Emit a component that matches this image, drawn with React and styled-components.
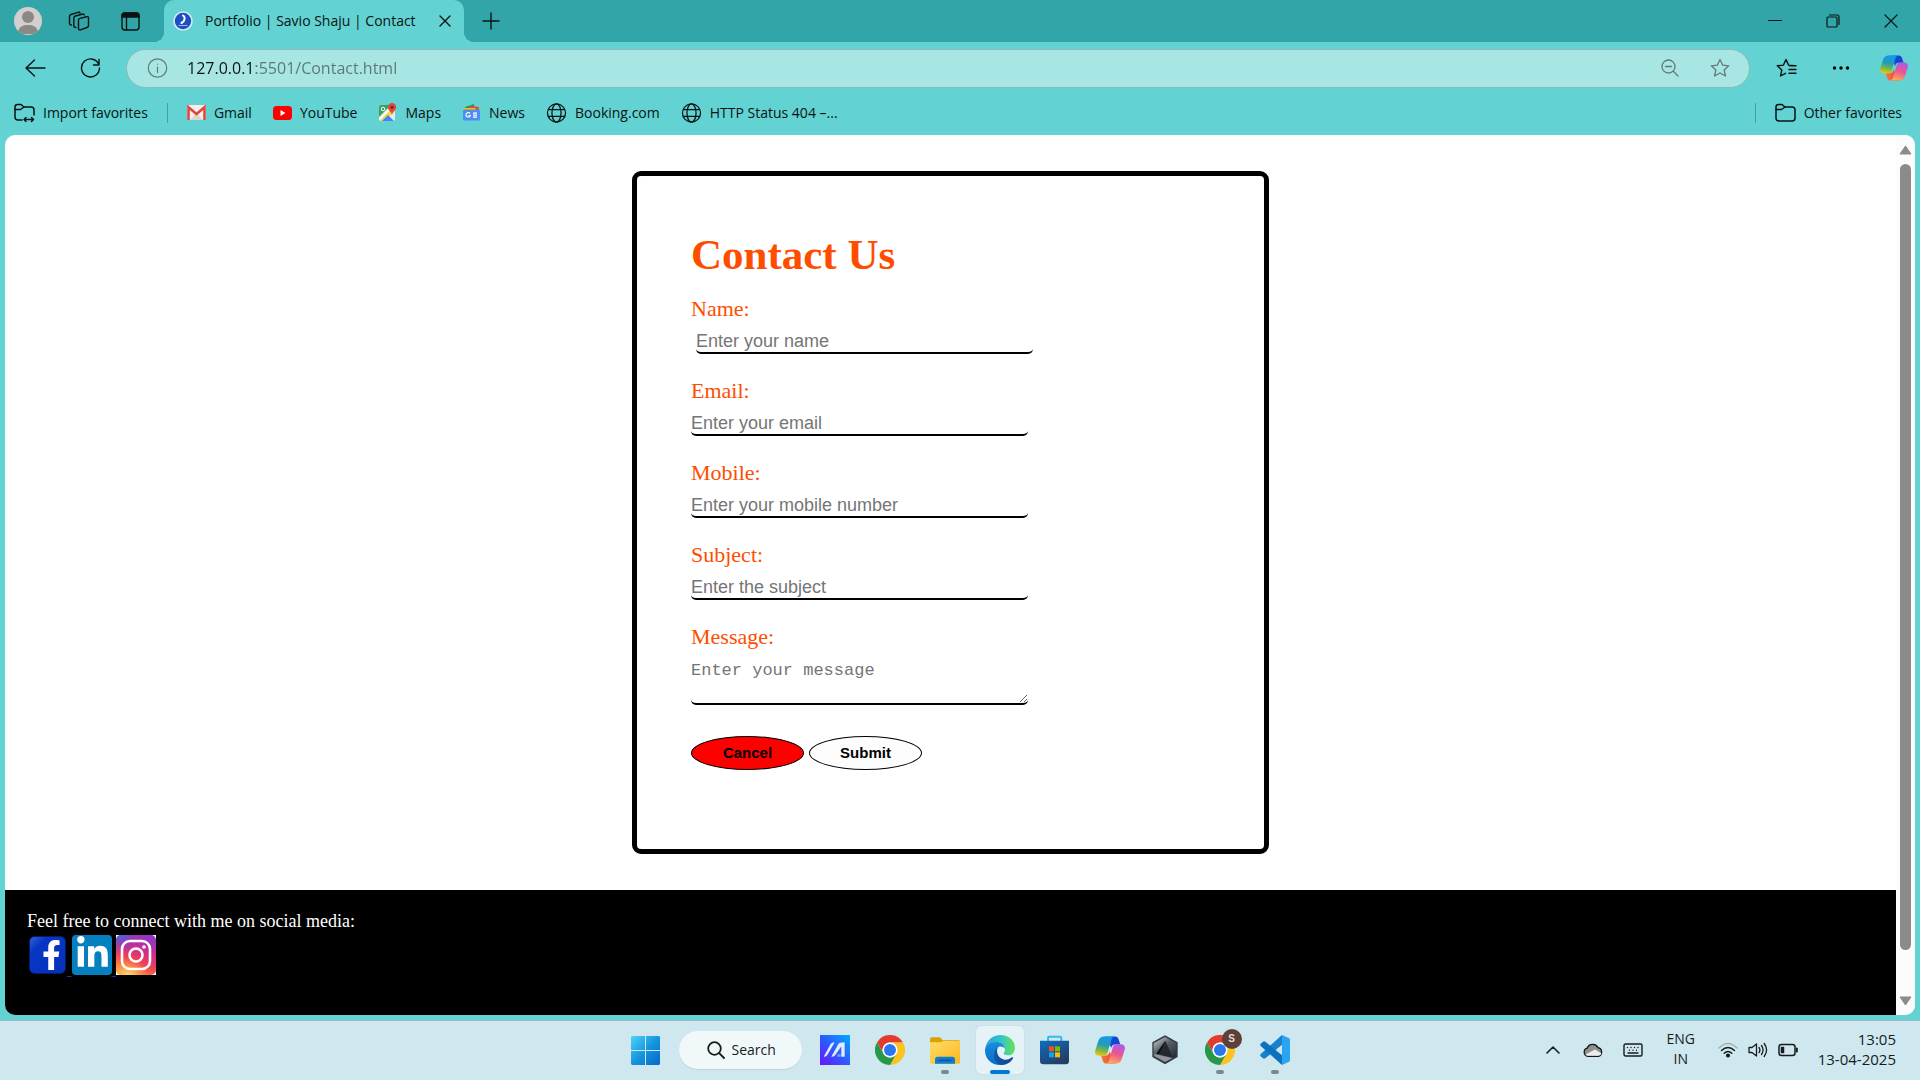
import React from "react";
import styled, { createGlobalStyle } from "styled-components";
import { FaFacebookF, FaLinkedinIn } from "react-icons/fa";

const ui = `"Open Sans", "Noto Sans", sans-serif`;
const serif = `"Liberation Serif", "Times New Roman", serif`;
const sans = `"Liberation Sans", Arial, sans-serif`;
const mono = `"Liberation Mono", "Courier New", monospace`;

const GlobalStyle = createGlobalStyle`
  *, *::before, *::after { box-sizing: border-box; }
  body { margin: 0; overflow: hidden; }
  button, input, textarea { margin: 0; font: inherit; }
  svg { flex: none; }
`;

const Screen = styled.div`
  display: flex;
  flex-direction: column;
  height: 100vh;
  background: #62d2d2;
  color: #0b1414;
  font: 14px/20px ${ui};
`;

/* ---------- browser chrome ---------- */

const TitleBar = styled.header`
  display: flex;
  height: 42px;
  background: #32a5a8;
`;

const PlainButton = styled.button`
  display: flex;
  align-items: center;
  justify-content: center;
  flex: none;
  width: ${(p) => p.$w || 20}px;
  height: 100%;
  padding: 0;
  border: 0;
  background: none;
  color: inherit;
`;

const ProfileTools = styled.div`
  display: flex;
  align-items: center;
  gap: 5px;
  padding: 0 11px 0 5px;
`;

const Tab = styled.div`
  position: relative;
  display: flex;
  align-items: center;
  width: 300px;
  padding: 0 12px 0 9px;
  border-radius: 10px 10px 0 0;
  background: #62d2d2;

  &::before,
  &::after {
    content: "";
    position: absolute;
    bottom: 0;
    width: 10px;
    height: 10px;
  }
  &::before {
    left: -10px;
    background: radial-gradient(circle at 0 0, #32a5a8 10px, #62d2d2 10px);
  }
  &::after {
    right: -10px;
    background: radial-gradient(circle at 100% 0, #32a5a8 10px, #62d2d2 10px);
  }
`;

const TabTitle = styled.span`
  flex: 1;
  margin-left: 12px;
  white-space: nowrap;
`;

const WindowControls = styled.div`
  display: flex;
  margin-left: auto;
`;

const Toolbar = styled.nav`
  display: flex;
  align-items: center;
  height: 52px;
  padding: 0 0 0 7px;
`;

const AddressBar = styled.label`
  display: flex;
  align-items: center;
  flex: 1;
  height: 39px;
  margin: 0 8px;
  padding: 0 4px 0 20px;
  border: 1px solid #8fb9ba;
  border-radius: 20px;
  background: #a8e6e4;
  color: #60797b;
`;

const AddressInput = styled.input`
  flex: 1;
  min-width: 0;
  height: 30px;
  margin-left: 19px;
  padding: 0;
  border: 0;
  outline: 0;
  font-size: 16px;
  color: transparent;
  background: linear-gradient(90deg, #0b1414 69px, #5c7577 69px);
  background-clip: text;
  -webkit-background-clip: text;
`;

const FavoritesBar = styled.nav`
  display: flex;
  align-items: center;
  height: 41px;
  padding: 0 18px 4px 14px;
  gap: 21px;
`;

const Favorite = styled.a`
  display: flex;
  align-items: center;
  gap: 8px;
  color: inherit;
  text-decoration: none;
  white-space: nowrap;
`;

const Divider = styled.span`
  width: 1px;
  height: 20px;
  background: #3f9fa1;
  margin: 0 -2px;
  margin-left: ${(p) => (p.$push ? "auto" : "-2px")};
`;

/* ---------- web page ---------- */

const Viewport = styled.div`
  display: flex;
  flex: 1;
  min-height: 0;
  margin: 0 5px 5px;
  border-radius: 10px;
  overflow: hidden;
  background: #fff;
`;

const Page = styled.div`
  display: flex;
  flex-direction: column;
  flex: 1;
  overflow: hidden;
`;

const Card = styled.main`
  width: 100%;
  max-width: 637px;
  margin: 36px auto;
  padding: 54px 54px 79px;
  border: 5px solid #000;
  border-radius: 9px;
  color: #ff4d00;
  font-family: ${serif};
`;

const Heading = styled.h1`
  margin: 0 0 16px;
  font-size: 43px;
  line-height: 50px;
`;

const Field = styled.div`
  display: flex;
  flex-direction: column;
  align-items: flex-start;
  gap: 8px;
  margin-bottom: 24px;
`;

const Label = styled.label`
  font-size: 22px;
  line-height: 26px;
`;

const TextInput = styled.input`
  width: 65%;
  height: 24px;
  margin-left: ${(p) => (p.$inset ? "5px" : "0")};
  padding: 0;
  border: 0;
  border-bottom: 2px solid #000;
  border-radius: 5px;
  outline: 0;
  font: 18px ${sans};
  &::placeholder { color: #757575; }
`;

const MessageInput = styled.textarea`
  display: block;
  width: 65%;
  height: 47px;
  padding: 2px 0 0;
  border: 0;
  border-bottom: 2px solid #000;
  border-radius: 5px;
  outline: 0;
  overflow: auto;
  resize: both;
  font: 17px/21px ${mono};
  &::placeholder { color: #757575; }
`;

const Actions = styled.div`
  display: flex;
  gap: 5px;
  padding-top: 7px;
`;

const OvalButton = styled.button`
  width: 113px;
  height: 34px;
  padding: 0 0 2px;
  border: 1px solid #000;
  border-radius: 50%;
  background: ${(p) => (p.$danger ? "#ff0000" : "#fdfdfd")};
  color: #000;
  font: bold 15px ${sans};
`;

const Footer = styled.footer`
  flex: 1;
  padding: 21px 22px;
  background: #000;
  color: #fff;
  font: 18px/20px ${serif};
`;

const FooterText = styled.p`
  margin: 0 0 4px;
`;

const SocialLink = styled.a`
  color: #551a8b;
`;

const ScrollTrack = styled.div`
  display: flex;
  flex-direction: column;
  align-items: center;
  width: 19px;
  padding: 10px 0 9px;
  background: #fcfcfc;
`;

const ScrollThumb = styled.div`
  width: 11px;
  flex: 1;
  margin: 9px 0 46px;
  border-radius: 6px;
  background: #8b8b8b;
`;

/* ---------- taskbar ---------- */

const Taskbar = styled.footer`
  display: grid;
  grid-template-columns: 1fr auto 1fr;
  align-items: center;
  height: 60px;
  padding-bottom: 1px;
  border-top: 1px solid #a5b9bd;
  background: #cfe7ee;
  color: #171c1e;
`;

const Apps = styled.div`
  grid-column: 2;
  display: flex;
  align-items: center;
  gap: 7px;
`;

const AppButton = styled.button`
  position: relative;
  display: flex;
  align-items: center;
  justify-content: center;
  width: 48px;
  height: 48px;
  padding: 0;
  border: 0;
  border-radius: 5px;
  background: ${(p) => (p.$active ? "#e5f2f7" : "none")};
  box-shadow: ${(p) => (p.$active ? "0 0 1px #9fb4bb" : "none")};

  &::after {
    content: "";
    position: absolute;
    bottom: 0;
    width: ${(p) => (p.$active ? 20 : 8)}px;
    height: 4px;
    border-radius: 2px;
    background: ${(p) => (p.$active ? "#0078d4" : p.$running ? "#7c898c" : "none")};
  }
`;

const SearchButton = styled.button`
  display: flex;
  align-items: center;
  gap: 7px;
  height: 38px;
  width: 123px;
  margin: 0 2px;
  padding: 0 0 0 28px;
  border: 0;
  border-radius: 19px;
  background: #f0f8fa;
  color: inherit;
  box-shadow: 0 1px 1px #bfd3d9;
`;

const Badge = styled.span`
  position: absolute;
  top: 3px;
  right: 2px;
  width: 20px;
  height: 20px;
  border-radius: 50%;
  background: #5d4037;
  color: #e3dcd9;
  font: bold 10px/20px ${sans};
`;

const Tray = styled.div`
  display: flex;
  align-items: center;
  justify-content: flex-end;
  padding-right: 24px;
`;

const TrayButton = styled(PlainButton)`
  width: ${(p) => p.$w || 30}px;
  height: 40px;
`;

const Language = styled.button`
  width: 56px;
  margin-right: 4px;
  padding: 0 0 2px;
  border: 0;
  background: none;
  color: inherit;
  text-align: center;
`;

const Clock = styled.time`
  margin-left: 15px;
  padding-bottom: 2px;
  font-size: 15px;
  text-align: right;
`;

/* ---------- icons ---------- */

const Line = ({ w = 20, h = 20, sw = 1.4, box, children }) => (
  <svg width={w} height={h} viewBox={box || `0 0 ${w} ${h}`} fill="none" stroke="currentColor" strokeWidth={sw} strokeLinecap="round" strokeLinejoin="round" aria-hidden="true">
    {children}
  </svg>
);

const Avatar = () => (
  <svg width="28" height="28" viewBox="0 0 28 28">
    <clipPath id="avatar"><circle cx="14" cy="14" r="14" /></clipPath>
    <g clipPath="url(#avatar)">
      <rect width="28" height="28" fill="#d2d0ce" />
      <circle cx="14" cy="10" r="6" fill="#8b8886" />
      <path d="M4 27c0-7 4-9 10-9s10 2 10 9z" fill="#8b8886" />
    </g>
  </svg>
);

const Workspaces = () => (
  <Line w={22} h={20}>
    <path d="M10.500 9Q10.500 7.800 12 7.400l6.500-1.700q2-.5 2 1.300v7.500q0 1.500-1.500 2l-6.500 2.300q-2 .5-2-1.300z" />
    <path d="M7.800 16.500Q5.800 16.500 5.800 14.500V7q0-1.500 1.500-2L14 3.200q2-.5 2.200.800" />
    <path d="M3.500 14Q1.500 14 1.500 12V5.500q0-1.500 1.500-2L10 1.300q1.800-.4 2 .700" />
  </Line>
);

const TabActions = () => (
  <Line w={19} h={19}>
    <rect x="1" y="1" width="17" height="17" rx="3" />
    <path d="M1 5V3.500Q1 1 3.500 1h12Q18 1 18 3.500V5z" fill="currentColor" />
    <path d="M5.500 5v13" />
  </Line>
);

const Favicon = () => (
  <svg width="20" height="20" viewBox="0 0 20 20">
    <circle cx="10" cy="10" r="9" fill="#1c4fc0" stroke="#d9e8f4" strokeWidth="1.600" />
    <path d="M10 4.500c2.500 1.500 2.200 5.500-1.500 7.500" fill="none" stroke="#fff" strokeWidth="2" strokeLinecap="round" />
    <path d="M5.500 14.500h9" stroke="#9db9ee" strokeWidth="1" />
  </svg>
);

const Folder = ({ arrow }) => (
  <Line w={21} h={20} sw={1.500}>
    {arrow ? (
      <path d="M8 17H4q-3 0-3-3V4q0-2.500 2.500-2.500H7L10 4h7q3 0 3 3v5M10 16.500h9.500M12 14.500l-2 2 2 2M17.500 14.500l2 2-2 2" />
    ) : (
      <path d="M1 4q0-2.500 2.500-2.500H7L10 4h7q3 0 3 3v8q0 3-3 3H4q-3 0-3-3z" />
    )}
    <path d="M1 6.500h5.500L10 4" />
  </Line>
);

const Globe = () => (
  <Line w={21} h={20} box="0 0 21 21" sw={1.300}>
    <circle cx="10.500" cy="10.500" r="9.500" />
    <ellipse cx="10.500" cy="10.500" rx="4.800" ry="9.500" />
    <path d="M2 7h17M2 14h17" />
  </Line>
);

const Gmail = () => (
  <svg width="19" height="15" viewBox="0 0 19 15">
    <rect width="19" height="15" rx="1.500" fill="#f4f0ee" />
    <path d="M3 15 9.500 8 16 15z" fill="#dcd6d3" />
    <path d="M1.500 15V2.200L9.500 9l8-6.800V15" fill="none" stroke="#df4a3f" strokeWidth="2.600" />
  </svg>
);

const YouTube = () => (
  <svg width="19" height="14" viewBox="0 0 19 14">
    <rect width="19" height="14" rx="3.500" fill="#f00" />
    <path d="M7.500 4v6l5-3z" fill="#fff" />
  </svg>
);

const Maps = () => (
  <svg width="19" height="19" viewBox="0 0 19 19">
    <clipPath id="mapclip"><rect x="1" y="2" width="16" height="16" rx="2" /></clipPath>
    <g clipPath="url(#mapclip)">
      <rect x="1" y="2" width="16" height="16" fill="#e8eaed" />
      <path d="M1 2h12L1 14z" fill="#35a35a" />
      <path d="M1 18 14 5l3 3L7 18z" fill="#fbd34b" />
      <path d="M4 18l6-6 6 6z" fill="#4285f4" />
      <path d="M1 17 15 3" stroke="#fff" strokeWidth="1.500" />
    </g>
    <path d="M14 0a4.200 4.200 0 0 1 4.200 4.200C18.200 7.500 14.600 8 14 12c-.6-4-4.200-4.500-4.200-7.800A4.200 4.200 0 0 1 14 0z" fill="#dd4b3e" />
    <circle cx="14" cy="4.200" r="1.500" fill="#7d1f16" />
    <circle cx="5" cy="6" r="1.800" fill="none" stroke="#fff" />
  </svg>
);

const News = () => (
  <svg width="19" height="17" viewBox="0 0 19 17">
    <path d="M3 3 12 0l1 6H3z" fill="#1e9e57" />
    <path d="M8 2l9 1-1 6H7z" fill="#ea4335" />
    <path d="M1.500 4h12l1 4h-13z" fill="#fbbc04" />
    <rect x="1" y="5.500" width="17" height="11" rx="1.500" fill="#4e8df5" />
    <path d="M8 9.500a2.200 2.200 0 1 0 .3 2H6.500M11 9.200h4M11 11.200h4M11 13.200h4" fill="none" stroke="#fff" strokeWidth="1.200" />
  </svg>
);

const starPath = "M10 1.500l2.600 5.600 6.100.7-4.500 4.200 1.200 6L10 15l-5.400 3 1.200-6L1.300 7.800l6.100-.7z";

const Copilot = ({ id, w, h }) => (
  <svg width={w} height={h} viewBox="0 0 90 83">
    <defs>
      <linearGradient id={`${id}a`} x1=".3" y1="0" x2=".1" y2="1">
        <stop offset="0" stopColor="#1597ee" /><stop offset=".4" stopColor="#279cb0" />
        <stop offset=".7" stopColor="#7fb945" /><stop offset="1" stopColor="#ffcb00" />
      </linearGradient>
      <linearGradient id={`${id}b`} x1=".7" y1="0" x2=".4" y2="1">
        <stop offset="0" stopColor="#ac5aed" /><stop offset=".5" stopColor="#ec5590" /><stop offset="1" stopColor="#ffa75d" />
      </linearGradient>
      <linearGradient id={`${id}c`}><stop offset="0" stopColor="#1fb0f0" /><stop offset=".5" stopColor="#1546cf" /></linearGradient>
      <linearGradient id={`${id}d`}><stop offset="0" stopColor="#f47a35" /><stop offset="1" stopColor="#ea3f40" /></linearGradient>
    </defs>
    <path d="M28 1h32c7 0 10 4 12 12l4 12H60c-8 0-9 4-11 10z" fill={`url(#${id}c)`} />
    <path d="M62 82H32c-6 0-8-5-10-12l-4-12h14c8 0 10-5 12-11z" fill={`url(#${id}d)`} />
    <path d="M28 1h29c-6 3-8 9-10 16L38 48c-2 7-5 11-12 11H13C3 59-2 52 1 42l9-28C13 5 19 1 28 1z" fill={`url(#${id}a)`} />
    <path d="M62 82H34c6-3 8-9 10-16l9-31c2-7 5-11 12-11h12c10 0 15 7 12 17l-9 28c-3 9-9 13-18 13z" fill={`url(#${id}b)`} />
  </svg>
);

const Windows = () => (
  <svg width="29" height="29" viewBox="0 0 29 29">
    <linearGradient id="win" x1="0" y1="0" x2="29" y2="29" gradientUnits="userSpaceOnUse">
      <stop stopColor="#4fd3fb" /><stop offset=".5" stopColor="#1596de" /><stop offset="1" stopColor="#0568c8" />
    </linearGradient>
    <path d="M1 0h13v14H0V1zM15 0h13l1 1v13H15zM0 15h14v14H1l-1-1zM15 15h14v13l-1 1H15z" fill="url(#win)" />
  </svg>
);

const MyAsus = () => (
  <svg width="30" height="30" viewBox="0 0 90 90">
    <linearGradient id="asus" x1="0" y1="1" x2="1" y2="0"><stop stopColor="#6b12ff" /><stop offset=".5" stopColor="#2b5cff" /><stop offset="1" stopColor="#00aaff" /></linearGradient>
    <rect width="90" height="90" fill="url(#asus)" />
    <path d="M11 65 32 27q3-5 12-5L22 60q-4 6-11 5zM34 65 55 27q3-5 19-5v43H64V34L46 60q-4 6-12 5z" fill="#e6e9ff" />
    <path d="M52 58h10v7H52z" fill="#7da4ff" />
  </svg>
);

const Chrome = () => (
  <svg width="30" height="30" viewBox="0 0 90 90">
    <path d="M6 22.500A45 45 0 0 1 84 22.500H45A22.500 22.500 0 0 0 25.500 56.250z" fill="#e33b2e" />
    <path d="M84 22.500A45 45 0 0 1 45 90L64.500 56.250A22.500 22.500 0 0 0 45 22.500z" fill="#fcc31e" />
    <path d="M45 90A45 45 0 0 1 6 22.500L25.500 56.250A22.500 22.500 0 0 0 64.500 56.250z" fill="#279847" />
    <circle cx="45" cy="45" r="22.500" fill="#fff" />
    <circle cx="45" cy="45" r="18" fill="#2b78ee" />
  </svg>
);

const Explorer = () => (
  <svg width="30" height="27" viewBox="0 0 90 81">
    <linearGradient id="fold" x1="0" y1="0" x2="1" y2="1"><stop stopColor="#ffdc6a" /><stop offset="1" stopColor="#fbb81c" /></linearGradient>
    <path d="M0 6q0-5 5-5h22q4 0 7 4l4 5h48q4 0 4 4v16H0z" fill="#e09f05" />
    <path d="M0 16h32l8-4h50v64q0 4-4 4H4q-4 0-4-4z" fill="url(#fold)" />
    <path d="M15 80V67q0-8 8-8h44q8 0 8 8v13z" fill="#117bd0" />
    <path d="M26 70h38" stroke="#064a86" strokeWidth="3" />
  </svg>
);

const Edge = () => (
  <svg width="30" height="30" viewBox="0 0 90 90">
    <defs>
      <linearGradient id="edgeA"><stop stopColor="#29a5dd" /><stop offset=".5" stopColor="#30c2cf" /><stop offset="1" stopColor="#66e455" /></linearGradient>
      <linearGradient id="edgeB" x1="0" y1="0" x2="0" y2="1"><stop stopColor="#168de0" /><stop offset="1" stopColor="#0a6cc9" /></linearGradient>
      <linearGradient id="edgeC"><stop stopColor="#0d5cab" /><stop offset="1" stopColor="#124487" /></linearGradient>
    </defs>
    <path d="M1 40C5 15 24 0 46 0c26 0 44 18 44 38 0 15-9 23-21 23-9 0-13-3-13-6 0-2 4-5 4-11 0-12-10-22-25-22C18 22 6 30 1 40z" fill="url(#edgeA)" />
    <path d="M0 45C1 31 15 21 33 21c15 0 25 8 27 20-6-8-17-9-22-3-6 12-4 28 8 38 5 4 10 8 16 10-6 3-12 4-17 4C19 90-1 70 0 45z" fill="url(#edgeB)" />
    <path d="M38 37c-6 15 2 35 21 37 9 1 17-3 22-7 2-1 4 1 3 3-8 14-20 20-34 20-14-2-24-15-23-30 0-10 5-18 11-23z" fill="url(#edgeC)" />
  </svg>
);

const Store = () => (
  <svg width="29" height="30" viewBox="0 0 87 90">
    <linearGradient id="store" x1="0" y1="0" x2=".6" y2="1"><stop stopColor="#0d6fc0" /><stop offset="1" stopColor="#263c66" /></linearGradient>
    <path d="M24 20V9q0-4 4-4h32q4 0 4 4v11" fill="none" stroke="#2bbdf2" strokeWidth="6" />
    <path d="M0 17h87v61q0 10-10 10H10Q0 88 0 78z" fill="url(#store)" />
    <path d="M27 34h15v15H27z" fill="#f25022" /><path d="M45 34h15v15H45z" fill="#7fba00" />
    <path d="M27 52h15v15H27z" fill="#0aa4ef" /><path d="M45 52h15v15H45z" fill="#ffb900" />
  </svg>
);

const Armoury = () => (
  <svg width="28" height="30" viewBox="0 0 84 90">
    <linearGradient id="arm" x1="0" y1="0" x2=".7" y2="1"><stop stopColor="#d6dbe0" /><stop offset=".45" stopColor="#59616b" /><stop offset="1" stopColor="#252a31" /></linearGradient>
    <path d="M42 1 80 22v44L42 88 4 66V22z" fill="#343a42" />
    <path d="M42 6 76 25v38L42 82 8 63V25z" fill="url(#arm)" />
    <path d="M43 17 66 69 16 56z" fill="#25292f" />
    <path d="M43 17 24 58l-8-2z" fill="#0d0f12" /><path d="M10 57 65 69 42 81 10 63z" fill="#8e969f" />
  </svg>
);

const VsCode = () => (
  <svg width="30" height="30" viewBox="0 0 90 90">
    <path d="M66 0 2 57q-3 4 0 7l7 6q3 2 7 0L68 28z" fill="#1482cd" />
    <path d="M66 90 2 33q-3-4 0-7l7-6q3-2 7 0L68 62z" fill="#0d72bd" />
    <path d="M66 0 86 9q4 2 4 6v60q0 4-4 6L66 90z" fill="#2aa6f0" />
  </svg>
);

const Instagram = () => (
  <svg width="40" height="40" viewBox="0 0 40 40">
    <defs>
      <linearGradient id="insta" x1=".3" y1="1" x2=".7" y2="0">
        <stop stopColor="#ff9d35" /><stop offset=".35" stopColor="#ef4553" /><stop offset=".65" stopColor="#d12b8b" /><stop offset="1" stopColor="#8e38c5" />
      </linearGradient>
      <radialGradient id="instaY" cx=".3" cy="1.050" r=".5"><stop stopColor="#ffe27b" /><stop offset="1" stopColor="#ff9d35" stopOpacity="0" /></radialGradient>
      <radialGradient id="instaB" cx=".1" cy="0" r=".5"><stop stopColor="#4267dc" /><stop offset="1" stopColor="#7b3cc9" stopOpacity="0" /></radialGradient>
    </defs>
    <rect width="40" height="40" fill="#fff" />
    <rect width="40" height="40" rx="5" fill="url(#insta)" />
    <rect width="40" height="40" rx="5" fill="url(#instaY)" />
    <rect width="40" height="40" rx="5" fill="url(#instaB)" />
    <rect x="6" y="6" width="28" height="28" rx="8" fill="none" stroke="#fff" strokeWidth="2.600" />
    <circle cx="20" cy="20" r="6.500" fill="none" stroke="#fff" strokeWidth="2.600" />
    <circle cx="28" cy="12" r="1.800" fill="#fff" />
  </svg>
);

const Facebook = () => (
  <svg width="40" height="40" viewBox="0 0 40 40">
    <linearGradient id="fb" x1="0" y1="0" x2="1" y2="1"><stop stopColor="#3763d8" /><stop offset=".25" stopColor="#0637c4" /><stop offset="1" stopColor="#0530bb" /></linearGradient>
    <rect x="2.500" y="1.500" width="36" height="37" rx="5" fill="url(#fb)" stroke="#031c68" />
    <FaFacebookF x="9.500" y="5" size={30} color="#fff" />
  </svg>
);

const LinkedIn = () => (
  <svg width="40" height="40" viewBox="0 0 40 40">
    <rect width="40" height="40" rx="4" fill="#0480be" />
    <FaLinkedinIn x="3" y="1" size={35} color="#fff" />
  </svg>
);

/* ---------- data ---------- */

const favorites = [
  ["Gmail", Gmail],
  ["YouTube", YouTube],
  ["Maps", Maps],
  ["News", News],
  ["Booking.com", Globe],
  ["HTTP Status 404 –...", Globe],
];

const fields = [
  { id: "name", label: "Name:", hint: "Enter your name", type: "text", inset: true },
  { id: "email", label: "Email:", hint: "Enter your email", type: "email" },
  { id: "mobile", label: "Mobile:", hint: "Enter your mobile number", type: "tel" },
  { id: "subject", label: "Subject:", hint: "Enter the subject", type: "text" },
];

export default function App() {
  return (
    <Screen>
      <GlobalStyle />
      <TitleBar>
        <ProfileTools>
          <PlainButton $w={46} aria-label="Profile"><Avatar /></PlainButton>
          <PlainButton $w={46} aria-label="Workspaces"><Workspaces /></PlainButton>
          <PlainButton $w={46} aria-label="Tab actions"><TabActions /></PlainButton>
        </ProfileTools>
        <Tab>
          <Favicon />
          <TabTitle>Portfolio | Savio Shaju | Contact</TabTitle>
          <PlainButton $w={14} aria-label="Close tab"><Line w={12} h={12}><path d="M1 1l10 10M11 1 1 11" /></Line></PlainButton>
        </Tab>
        <PlainButton $w={54} aria-label="New tab"><Line w={18} h={18}><path d="M9 1v16M1 9h16" /></Line></PlainButton>
        <WindowControls>
          <PlainButton $w={58} aria-label="Minimize"><Line w={14} h={14} sw={1}><path d="M.5 6.500h13" /></Line></PlainButton>
          <PlainButton $w={58} aria-label="Restore"><Line w={14} h={14} sw={1.200}><rect x="1" y="3" width="10" height="10" rx="1" /><path d="M3.500 1H11q2 0 2 2v7.500" /></Line></PlainButton>
          <PlainButton $w={58} aria-label="Close"><Line w={14} h={14} sw={1.200}><path d="M1 1l12 12M13 1 1 13" /></Line></PlainButton>
        </WindowControls>
      </TitleBar>

      <Toolbar>
        <PlainButton $w={56} aria-label="Back"><Line w={21} h={18}><path d="M20 9H1M9.500 1 1 9l8.500 8" /></Line></PlainButton>
        <PlainButton $w={55} aria-label="Refresh"><Line w={21} h={20} box="0 0 20 20"><path d="M18.500 7A9 9 0 1 0 19 10M18.500 1.500V7H13" /></Line></PlainButton>
        <AddressBar>
          <Line w={21} h={20} sw={1.200} box="0 0 20 20"><circle cx="10" cy="10" r="9.200" /><path d="M10 9v5.500M10 6v.2" /></Line>
          <AddressInput aria-label="Address" defaultValue="127.0.0.1:5501/Contact.html" />
          <PlainButton $w={50} aria-label="Zoom out"><Line w={18} h={18} sw={1.300}><circle cx="7.500" cy="7.500" r="6.500" /><path d="M4.500 7.500h6M12.300 12.300 17 17" /></Line></PlainButton>
          <PlainButton $w={50} aria-label="Add to favorites"><Line w={20} h={20} sw={1.300}><path d={starPath} /></Line></PlainButton>
        </AddressBar>
        <PlainButton $w={56} aria-label="Favorites"><Line w={21} h={20}><path d="M9.500 15.300 4.600 18l1.200-6L1.300 7.800l6.100-.7L10 1.500l2.600 5.600 6.100.7M13.500 7.800h6.500M13 11.500h7M13 15.200h7" /></Line></PlainButton>
        <PlainButton $w={54} aria-label="Settings and more"><svg width="18" height="4"><circle cx="2.500" cy="2" r="1.700" /><circle cx="9" cy="2" r="1.700" /><circle cx="15.500" cy="2" r="1.700" /></svg></PlainButton>
        <PlainButton $w={52} aria-label="Copilot"><Copilot id="top" w={28} h={26} /></PlainButton>
      </Toolbar>

      <FavoritesBar>
        <Favorite href="#import"><Folder arrow />Import favorites</Favorite>
        <Divider />
        {favorites.map(([name, Icon]) => (
          <Favorite href="#favorite" key={name}><Icon />{name}</Favorite>
        ))}
        <Divider $push />
        <Favorite href="#other"><Folder />Other favorites</Favorite>
      </FavoritesBar>

      <Viewport>
        <Page>
          <Card>
            <Heading>Contact Us</Heading>
            <form>
              {fields.map((f) => (
                <Field key={f.id}>
                  <Label htmlFor={f.id}>{f.label}</Label>
                  <TextInput id={f.id} type={f.type} placeholder={f.hint} $inset={f.inset} />
                </Field>
              ))}
              <Field>
                <Label htmlFor="message">Message:</Label>
                <MessageInput id="message" rows={2} placeholder="Enter your message" />
              </Field>
              <Actions>
                <OvalButton type="reset" $danger>Cancel</OvalButton>
                <OvalButton type="button">Submit</OvalButton>
              </Actions>
            </form>
          </Card>
          <Footer>
            <FooterText>Feel free to connect with me on social media:</FooterText>
            <SocialLink href="#facebook" aria-label="Facebook"><Facebook />{" "}</SocialLink>
            <SocialLink href="#linkedin" aria-label="LinkedIn"><LinkedIn />{" "}</SocialLink>
            <SocialLink href="#instagram" aria-label="Instagram"><Instagram /></SocialLink>
          </Footer>
        </Page>
        <ScrollTrack>
          <svg width="13" height="10"><path d="M6.500 1 12 9H1z" fill="#8b8b8b" stroke="#8b8b8b" strokeLinejoin="round" /></svg>
          <ScrollThumb />
          <svg width="13" height="10"><path d="M6.500 9 12 1H1z" fill="#8b8b8b" stroke="#8b8b8b" strokeLinejoin="round" /></svg>
        </ScrollTrack>
      </Viewport>

      <Taskbar>
        <Apps>
          <AppButton aria-label="Start"><Windows /></AppButton>
          <SearchButton><Line w={18} h={18} sw={1.800}><circle cx="7.500" cy="7.500" r="6.300" /><path d="M12.200 12.200 17 17" /></Line>Search</SearchButton>
          <AppButton aria-label="MyASUS"><MyAsus /></AppButton>
          <AppButton aria-label="Chrome"><Chrome /></AppButton>
          <AppButton aria-label="File Explorer" $running><Explorer /></AppButton>
          <AppButton aria-label="Edge" $active><Edge /></AppButton>
          <AppButton aria-label="Store"><Store /></AppButton>
          <AppButton aria-label="Copilot app"><Copilot id="task" w={30} h={28} /></AppButton>
          <AppButton aria-label="Armoury Crate"><Armoury /></AppButton>
          <AppButton aria-label="Chrome profile" $running><Chrome /><Badge>S</Badge></AppButton>
          <AppButton aria-label="Visual Studio Code" $running><VsCode /></AppButton>
        </Apps>
        <Tray>
          <TrayButton $w={40} aria-label="Show hidden icons"><Line w={14} h={8} sw={1.600}><path d="M1 7l6-6 6 6" /></Line></TrayButton>
          <TrayButton $w={40} aria-label="OneDrive">
            <svg width="20" height="14" viewBox="0 0 20 14">
              <path d="M5 13.300a4.200 4.200 0 0 1-.8-8.200A6 6 0 0 1 15 4.600a4.500 4.500 0 0 1 .5 8.700z" fill="#8d8f91" stroke="#151515" strokeWidth="1.300" />
              <path d="M2.500 11.500 12 6.500l6.500 4q-1 2.200-3.500 2.200H5q-1.500 0-2.500-1.200z" fill="#ececec" />
            </svg>
          </TrayButton>
          <TrayButton $w={40} aria-label="Touch keyboard"><Line w={20} h={14}><rect x="1" y="1" width="18" height="12" rx="1.500" /><path d="M4.500 4.500h0M8 4.500h0M11.500 4.500h0M15 4.500h0M6.500 7.200h0M10 7.200h0M13.500 7.200h0M5 10h10" /></Line></TrayButton>
          <Language>ENG<br />IN</Language>
          <TrayButton aria-label="Network">
            <Line w={20} h={16} sw={1.500}>
              <path d="M1 6Q10-3 19 6" stroke="#9fb1b6" /><path d="M3.500 8.500q6.500-6 13 0M6.200 11.200q3.800-3.500 7.600 0" /><circle cx="10" cy="13.500" r="1.300" fill="currentColor" />
            </Line>
          </TrayButton>
          <TrayButton aria-label="Volume"><Line w={20} h={16} sw={1.300}><path d="M1 5.500h3L8.500 2v12L4 10.500H1zM11 5.500q1.800 2.500 0 5M13.500 3.500q3.200 4.500 0 9M16.200 1.500q4.800 6.500 0 13" /></Line></TrayButton>
          <TrayButton aria-label="Battery">
            <Line w={20} h={14} sw={1.500}><rect x="1" y="1.500" width="16" height="11" rx="2.500" /><path d="M3.500 4.500h2v5h-2z" fill="currentColor" /><path d="M18.800 5.500v3" strokeWidth="2" /></Line>
          </TrayButton>
          <Clock>13:05<br />13-04-2025</Clock>
        </Tray>
      </Taskbar>
    </Screen>
  );
}
